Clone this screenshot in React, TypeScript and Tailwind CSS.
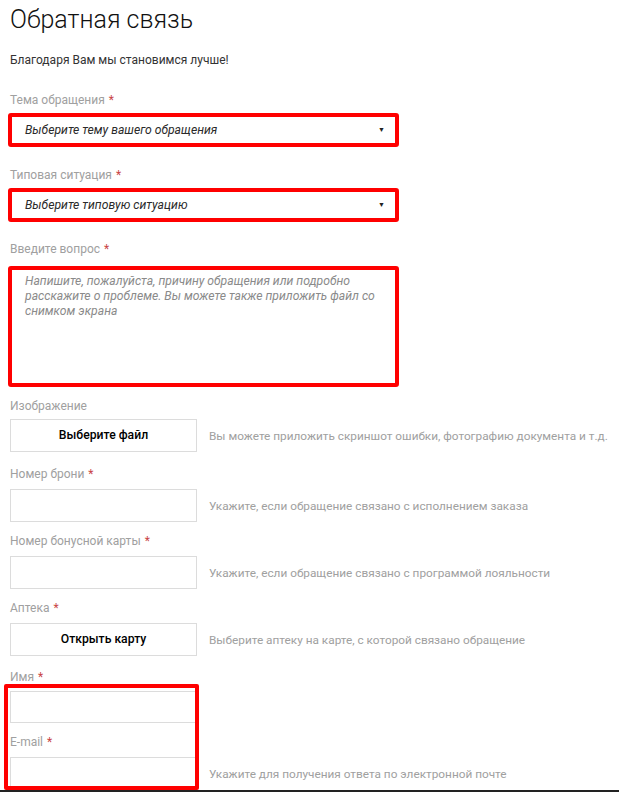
import type { ReactNode } from "react";

const font = { fontFamily: "Roboto, 'Noto Sans', sans-serif" };

function Label({ children, required = true }: { children: ReactNode; required?: boolean }) {
  return (
    <div className="h-[16px] text-[12px] leading-[16px] text-[#a0a0a0]">
      {children}
      {required && <span className="ml-[4px] text-[#c94545]">*</span>}
    </div>
  );
}

function Hint({ children }: { children: ReactNode }) {
  return <div className="whitespace-nowrap text-[11.8px] leading-[16px] text-[#a0a0a0]">{children}</div>;
}

function Select({ text }: { text: string }) {
  return (
    <div className="ml-[-2px] flex h-[34px] w-[391px] items-center justify-between rounded-[3px] border-[4px] border-[#ff0000] pl-[13px] pr-[10px]">
      <span className="text-[12.2px] italic text-[#2a2a2a]">{text}</span>
      <span className="text-[7px] text-[#222]">▼</span>
    </div>
  );
}

function Row({ children, hint }: { children: ReactNode; hint?: string }) {
  return (
    <div className="flex items-center gap-[12px]">
      {children}
      {hint && <Hint>{hint}</Hint>}
    </div>
  );
}

function Input({ height = 33 }: { height?: number }) {
  return <div className="w-[187px] shrink-0 border border-[#dcdcdc] bg-white" style={{ height }} />;
}

function Button({ text }: { text: string }) {
  return (
    <div className="flex h-[33px] w-[187px] shrink-0 items-center justify-center border border-[#dcdcdc] bg-white text-[12.2px] font-medium text-black">
      {text}
    </div>
  );
}

export default function App() {
  return (
    <div className="flex h-[792px] flex-col overflow-hidden bg-white pl-[10px]" style={font}>
      <h1 className="h-[40px] text-[25px] font-light leading-[40px] text-[#111]">Обратная связь</h1>
      <p className="mt-[12px] text-[12px] leading-[16px] text-[#333]">Благодаря Вам мы становимся лучше!</p>

      <div className="mt-[24px]">
        <Label>Тема обращения</Label>
      </div>
      <div className="mt-[5px]">
        <Select text="Выберите тему вашего обращения" />
      </div>

      <div className="mt-[20px]">
        <Label>Типовая ситуация</Label>
      </div>
      <div className="mt-[5px]">
        <Select text="Выберите типовую ситуацию" />
      </div>

      <div className="mt-[19px]">
        <Label>Введите вопрос</Label>
      </div>
      <div className="ml-[-2px] mt-[9px] h-[121px] w-[391px] shrink-0 rounded-[3px] border-[4px] border-[#ff0000] pl-[13px] pt-[4px] text-[12.2px] italic leading-[15px] text-[#8a8a8a]">
        <div>Напишите, пожалуйста, причину обращения или подробно</div>
        <div>расскажите о проблеме. Вы можете также приложить файл со</div>
        <div>снимком экрана</div>
      </div>

      <div className="mt-[11px]">
        <Label required={false}>Изображение</Label>
      </div>
      <div className="mt-[5px]">
        <Row hint="Вы можете приложить скриншот ошибки, фотографию документа и т.д.">
          <Button text="Выберите файл" />
        </Row>
      </div>

      <div className="mt-[14px]">
        <Label>Номер брони</Label>
      </div>
      <div className="mt-[7px]">
        <Row hint="Укажите, если обращение связано с исполнением заказа">
          <Input />
        </Row>
      </div>

      <div className="mt-[11px]">
        <Label>Номер бонусной карты</Label>
      </div>
      <div className="mt-[7px]">
        <Row hint="Укажите, если обращение связано с программой лояльности">
          <Input />
        </Row>
      </div>

      <div className="mt-[11px]">
        <Label>Аптека</Label>
      </div>
      <div className="mt-[7px]">
        <Row hint="Выберите аптеку на карте, с которой связано обращение">
          <Button text="Открыть карту" />
        </Row>
      </div>

      <div className="mt-[13px]">
        <Label>Имя</Label>
      </div>
      <div className="relative mt-[6px]">
        <Input height={32} />
        <div className="mt-[11px]">
          <Label>E-mail</Label>
        </div>
        <div className="mt-[7px]">
          <Row hint="Укажите для получения ответа по электронной почте">
            <Input />
          </Row>
        </div>
        <div className="pointer-events-none absolute left-[-6px] top-[-7px] h-[106px] w-[195px] rounded-[2px] border-[4px] border-[#ff0000]" />
      </div>
      <div className="ml-[-10px] h-[3px] w-[619px] shrink-0 bg-[#222]" />
    </div>
  );
}
